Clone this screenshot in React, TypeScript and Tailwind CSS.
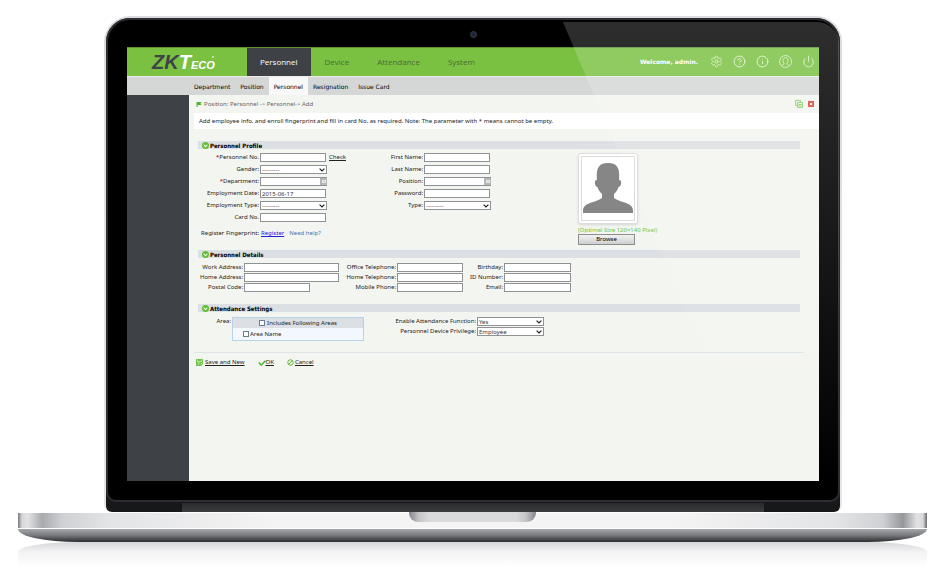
import { useId, type ReactNode } from "react";
import { Info, Power, Settings, CircleQuestionMark } from "lucide-react";

const tabs = ["Personnel", "Device", "Attendance", "System"];
const subTabs = ["Department", "Position", "Personnel", "Resignation", "Issue Card"];

const box = "h-[9px] border border-[#8f9193] bg-white px-px text-[6px] leading-none text-[#333] outline-none";

type FieldProps = {
  label: string;
  labelWidth: string;
  required?: boolean;
  kind?: "text" | "password" | "select" | "picker";
  value?: string;
  width?: string;
  children?: ReactNode;
};

function Field({ label, labelWidth, required, kind = "text", value, width = "w-[66px]", children }: FieldProps) {
  const id = useId();
  return (
    <div className="flex h-[9px] items-center">
      <label htmlFor={id} className={`${labelWidth} mr-px flex shrink-0 items-center justify-end whitespace-nowrap`}>
        {required && <span className="font-bold text-[#e02010]">*</span>}
        {label}
      </label>
      {kind === "select" ? (
        <span className="relative flex">
          <select id={id} className={`${box} w-[67px] appearance-none`} defaultValue={value}>
            <option>{value}</option>
          </select>
          <svg viewBox="0 0 6 4" className="pointer-events-none absolute top-[3px] right-[2px] h-[4px] w-[6px]">
            <path d="M.6.6 3 3 5.4.6" fill="none" stroke="#222" strokeWidth="1.2" />
          </svg>
        </span>
      ) : (
        <span className="relative flex">
          <input id={id} type={kind === "password" ? "password" : "text"} className={`${box} ${width}`} defaultValue={value} />
          {kind === "picker" && (
            <button type="button" aria-label={`Choose ${label}`} className="absolute top-px right-0 flex size-[7px] items-center justify-center bg-[#b4b6b8]">
              <span className="h-[3px] w-[4px] border border-[#e8e8e8] bg-[#cfd1d2]" />
            </button>
          )}
        </span>
      )}
      {children}
    </div>
  );
}

function SectionTitle({ children }: { children: ReactNode }) {
  return (
    <h2 className="flex h-[8px] items-center gap-px bg-[#dcdfe3] pl-[4px] font-['DejaVu_Sans_Condensed','DejaVu_Sans',sans-serif] text-[6px] font-bold text-black">
      <svg viewBox="0 0 14 14" className="size-[7px]">
        <circle cx="7" cy="7" r="7" fill="#62bf36" />
        <path d="m3.500 5.500 3.500 4 3.500-4" fill="none" stroke="#fff" strokeWidth="2.200" />
      </svg>
      {children}
    </h2>
  );
}

function UserIcon() {
  return (
    <svg viewBox="0 0 24 24" className="size-[13px]" fill="none" stroke="currentColor" strokeWidth="1.600">
      <circle cx="12" cy="12" r="11" />
      <path d="M6 18.500c1-.8 3.500-1 3.500-2.200 0-1.300-2-2.500-2-6C7.500 7 9.500 5 12 5s4.500 2 4.500 5.300c0 3.500-2 4.700-2 6 0 1.200 2.500 1.400 3.500 2.200" />
    </svg>
  );
}

function Header() {
  return (
    <header className="flex h-[29px] items-stretch border-t border-[#5f8f3c] bg-[#7ac142] font-['Open_Sans',sans-serif] text-[8px]">
      <a href="#home" aria-label="ZKTeco" className="flex w-[120px] shrink-0 items-baseline pl-[25px] font-['Liberation_Sans',sans-serif] text-[20px] leading-[28px] font-bold text-white italic">
        <span className="text-[#3f4447]">ZK</span>T<span className="text-[11px]">ECO</span>
        <span className="mt-[8px] -ml-[3px] size-[2px] self-start rounded-full bg-white/70" />
      </a>
      <nav className="flex">
        {tabs.map((tab, i) => (
          <a key={tab} href={`#${tab}`} className={`flex items-center ${i === 0 ? "bg-[#3e4246] px-[13px] text-white" : "px-[14px] text-[#4b6a35]"}`}>
            {tab}
          </a>
        ))}
      </nav>
      <div className="ml-auto flex items-center gap-[10px] pr-[4px] pb-[2px] text-[#e0f2d0]">
        <span className="mr-[2px] font-['DejaVu_Sans',sans-serif] text-[6px] font-bold whitespace-nowrap text-white">Welcome, admin.</span>
        <button type="button" aria-label="Settings"><Settings size={13} strokeWidth={1.5} /></button>
        <button type="button" aria-label="Help"><CircleQuestionMark size={13} strokeWidth={1.8} /></button>
        <button type="button" aria-label="About"><Info size={13} strokeWidth={1.8} /></button>
        <button type="button" aria-label="Account"><UserIcon /></button>
        <button type="button" aria-label="Log out"><Power size={13} strokeWidth={1.6} /></button>
      </div>
    </header>
  );
}

function Profile() {
  return (
    <section className="h-[109px]">
      <SectionTitle>Personnel Profile</SectionTitle>
      <div className="flex pt-[4px]">
        <div className="flex w-[180px] flex-col gap-[3px]">
          <Field label="Personnel No." labelWidth="w-[61px]" required>
            <a href="#check" className="ml-[3px] underline">Check</a>
          </Field>
          <Field label="Gender:" labelWidth="w-[61px]" kind="select" value="---------" />
          <Field label="Department:" labelWidth="w-[61px]" required kind="picker" width="w-[67px]" />
          <Field label="Employment Date:" labelWidth="w-[61px]" value="2015-06-17" />
          <Field label="Employment Type:" labelWidth="w-[61px]" kind="select" value="---------" />
          <Field label="Card No." labelWidth="w-[61px]" />
          <div className="mt-[4px] flex h-[9px] items-center whitespace-nowrap">
            <span className="mr-[2px] flex w-[61px] justify-end">Register Fingerprint:</span>
            <a href="#register" className="text-[#2222dd] underline">Register</a>
            <a href="#help" className="ml-[5px] text-[#3d78b4]">Need help?</a>
          </div>
        </div>
        <div className="flex w-[200px] flex-col gap-[3px]">
          <Field label="First Name:" labelWidth="w-[45px]" />
          <Field label="Last Name:" labelWidth="w-[45px]" />
          <Field label="Position:" labelWidth="w-[45px]" kind="picker" width="w-[67px]" />
          <Field label="Password:" labelWidth="w-[45px]" kind="password" />
          <Field label="Type:" labelWidth="w-[45px]" kind="select" value="---------" />
        </div>
        <div>
          <div className="h-[71px] w-[60px] rounded-[3px] border border-[#dcdedc] bg-white p-[2px] shadow-sm">
            <svg viewBox="0 0 52 63" className="h-[65px] w-[54px] border border-[#dcdcdc]">
              <path d="M15 23C14 12 16 6 26 6s12 6 11 17c2 0 2.500 2 2 4-.5 2-1.300 3-2.500 3-.8 3-2.500 5-4.500 7v4c4 3 8 3.500 12 5 5 2 7 4 7 8v2H1v-2c0-4 2-6 7-8 4-1.500 8-2 12-5v-4c-2-2-3.700-4-4.500-7-1.200 0-2-1-2.500-3-.5-2 0-4 2-4z" fill="#868686" />
            </svg>
          </div>
          <p className="mt-[2px] h-[8px] leading-[8px] whitespace-nowrap text-[#6cc63a]">(Optimal Size 120×140 Pixel)</p>
          <button type="button" className="flex h-[11px] w-[57px] items-center justify-center border border-[#8b8d8f] bg-linear-to-b from-[#f2f2f2] to-[#cfcfcf] text-black">
            Browse
          </button>
        </div>
      </div>
    </section>
  );
}

function Details() {
  return (
    <section className="h-[54px]">
      <SectionTitle>Personnel Details</SectionTitle>
      <div className="flex pt-[5px]">
        <div className="flex w-[147px] flex-col gap-px">
          <Field label="Work Address:" labelWidth="w-[45px]" width="w-[95px]" />
          <Field label="Home Address:" labelWidth="w-[45px]" width="w-[95px]" />
          <Field label="Postal Code:" labelWidth="w-[45px]" />
        </div>
        <div className="flex w-[124px] flex-col gap-px">
          <Field label="Office Telephone:" labelWidth="w-[51px]" />
          <Field label="Home Telephone:" labelWidth="w-[51px]" />
          <Field label="Mobile Phone:" labelWidth="w-[51px]" />
        </div>
        <div className="flex flex-col gap-px">
          <Field label="Birthday:" labelWidth="w-[34px]" width="w-[67px]" />
          <Field label="ID Number:" labelWidth="w-[34px]" width="w-[67px]" />
          <Field label="Email:" labelWidth="w-[34px]" width="w-[67px]" />
        </div>
      </div>
    </section>
  );
}

const tick = "size-[6px] appearance-none border border-[#6d7f92] bg-white";

function AttendanceSettings() {
  return (
    <section>
      <SectionTitle>Attendance Settings</SectionTitle>
      <div className="flex pt-[5px]">
        <span className="mr-px w-[33px] text-right leading-[9px]">Area:</span>
        <div className="h-[24px] w-[132px] border border-[#b7d2ea] bg-[#f3f8fe]">
          <label className="flex h-[10px] items-center justify-center gap-[2px] bg-[#dcdfe3]">
            <input type="checkbox" className={tick} />
            Includes Following Areas
          </label>
          <label className="flex h-[12px] items-center gap-px pl-[10px]">
            <input type="checkbox" className={tick} />
            Area Name
          </label>
        </div>
        <div className="ml-[28px] flex flex-col gap-px">
          <Field label="Enable Attendance Function:" labelWidth="w-[84px]" kind="select" value="Yes" />
          <Field label="Personnel Device Privilege:" labelWidth="w-[84px]" kind="select" value="Employee" />
        </div>
      </div>
    </section>
  );
}

function Content() {
  return (
    <main className="min-w-0 flex-1 bg-[#f3f5f0] font-['Noto_Sans',sans-serif] text-[6px] leading-[9px] text-[#222]">
      <div className="flex h-[18px] items-center pr-[5px] pl-[7px] text-[#666]">
        <svg viewBox="0 0 12 12" className="mr-[2px] size-[6px]">
          <path d="M1 2h10l-2 3 2 3H3v4H1z" fill="#4fb52c" />
        </svg>
        Position: Personnel -&gt; Personnel-&gt; Add
        <button type="button" aria-label="Pages" className="ml-auto">
          <svg viewBox="0 0 16 16" className="size-[8px]" fill="#e4f6d8" stroke="#8fce6c" strokeWidth="2">
            <path d="M1 1h10v10H1z" />
            <path d="M5 5h10v10H5zM7 9h6M7 12h6" />
          </svg>
        </button>
        <button type="button" aria-label="Close" className="ml-[5px]">
          <svg viewBox="0 0 12 12" className="size-[6px]">
            <path d="M0 0h12v12H0z" fill="#d4483a" />
            <path d="m3.500 3.500 5 5m0-5-5 5" stroke="#fff" strokeWidth="1.800" />
          </svg>
        </button>
      </div>
      <p className="ml-[5px] flex h-[16px] items-center bg-white pl-[5px] whitespace-nowrap">
        Add employee info, and enroll fingerprint and fill in card No. as required. Note: The parameter with * means cannot be empty.
      </p>
      <form className="pt-[12px] pr-[19px] pl-[9px]">
        <Profile />
        <Details />
        <AttendanceSettings />
      </form>
      <div className="mt-[11px] mr-[15px] ml-[5px] flex h-[20px] items-center gap-[13px] border-t border-[#dfe4e6] pl-[2px] whitespace-nowrap">
        <a href="#save" className="flex items-center gap-[2px] underline">
          <svg viewBox="0 0 14 14" className="size-[7px]">
            <path d="M0 0h14v10l-4 4H0z" fill="#6fc04a" />
            <path d="M3 1v4h8V1M3 8h5M3 11h3m3 0 4-4" fill="none" stroke="#e5f5dc" strokeWidth="1.300" />
          </svg>
          Save and New
        </a>
        <a href="#ok" className="flex items-center underline">
          <svg viewBox="0 0 16 12" className="h-[6px] w-[8px]">
            <path d="m1.500 5 5 5L15 1.500" fill="none" stroke="#4fb52c" strokeWidth="3" />
          </svg>
          OK
        </a>
        <a href="#cancel" className="flex items-center gap-px underline">
          <svg viewBox="0 0 14 14" className="size-[7px]" fill="none" stroke="#5cb832" strokeWidth="2">
            <circle cx="7" cy="7" r="5.500" />
            <path d="m3.500 10.500 7-7" />
          </svg>
          Cancel
        </a>
      </div>
    </main>
  );
}

export default function App() {
  return (
    <div className="flex min-h-screen flex-col bg-white pt-[16px] pr-[17px] pl-[18px]">
      <div className="relative mr-[85px] ml-[86px] flex flex-1 flex-col rounded-t-[26px] rounded-b-[8px] bg-linear-to-b from-[#dcdcde] to-[#e6e6e8] px-[2px] pt-[2px]">
        <div className="flex flex-1 flex-col rounded-t-[24px] rounded-b-[6px] bg-[#17181a]">
          <div className="flex flex-1 flex-col rounded-t-[24px] rounded-b-[10px] border-2 border-[#2c2e31] bg-black px-[19px] pb-[19px]">
            <div className="flex h-[27px] items-center justify-center">
              <span className="mt-px size-[7px] rounded-full border border-[#3c3c3c] bg-[#1c2440]" />
            </div>
            <div className="flex flex-1 flex-col">
              <Header />
              <nav className="flex h-[19px] border-t border-[#ececec] bg-[#d5d7d7] pl-[62px] font-['DejaVu_Sans',sans-serif] text-[6px] text-black">
                {subTabs.map((tab, i) => (
                  <a key={tab} href={`#${tab}`} className={`flex items-center px-[5px] whitespace-nowrap ${i === 2 ? "bg-[#f8f8f8]" : ""}`}>
                    {tab}
                  </a>
                ))}
              </nav>
              <div className="flex flex-1">
                <aside className="w-[62px] shrink-0 bg-[#3e4246]" />
                <Content />
              </div>
            </div>
          </div>
          <div className="mx-[76px] mt-px h-[9px] bg-linear-to-b from-[#2a2b2d] to-[#3c3d40]" />
        </div>
        <div className="pointer-events-none absolute inset-x-[3px] top-[6px] bottom-[31px] rounded-tr-[22px] bg-linear-to-b from-white/18 to-transparent [clip-path:polygon(456px_0,100%_0,100%_100%,650px_100%)]" />
      </div>
      <div className="relative">
        <div className="h-[17px] border-y border-white bg-[linear-gradient(90deg,#77787c_0,#d8d8da_4px,#e2e2e4_10px,#a9aaae_24px,#cfd0d3_44px,#e3e4e6_90px,#f4f4f4_260px,#f4f4f4_50%,#f4f4f4_calc(100%-260px),#e3e4e6_calc(100%-90px),#cfd0d3_calc(100%-44px),#96979b_calc(100%-24px),#e2e2e4_calc(100%-10px),#d8d8da_calc(100%-4px),#66676b_100%)]" />
        <div className="absolute inset-x-0 top-0 mx-auto h-[10px] w-[127px] rounded-b-[9px] bg-[linear-gradient(90deg,#85868a_0,#c4c5c8_10px,#dadadc_20px,#dadadc_107px,#c4c5c8_117px,#85868a_127px)]" />
        <div className="h-[13px] rounded-[0_0_60px_60px/0_0_13px_13px] bg-linear-to-b from-[#a6a7ab] via-[#77787c] to-[#2c2d30]" />
      </div>
      <div className="h-[25px] rounded-[60px_60px_0_0/10px_10px_0_0] bg-linear-to-b from-[#d6d7d9] via-[#f3f3f4] via-40% to-white" />
    </div>
  );
}
